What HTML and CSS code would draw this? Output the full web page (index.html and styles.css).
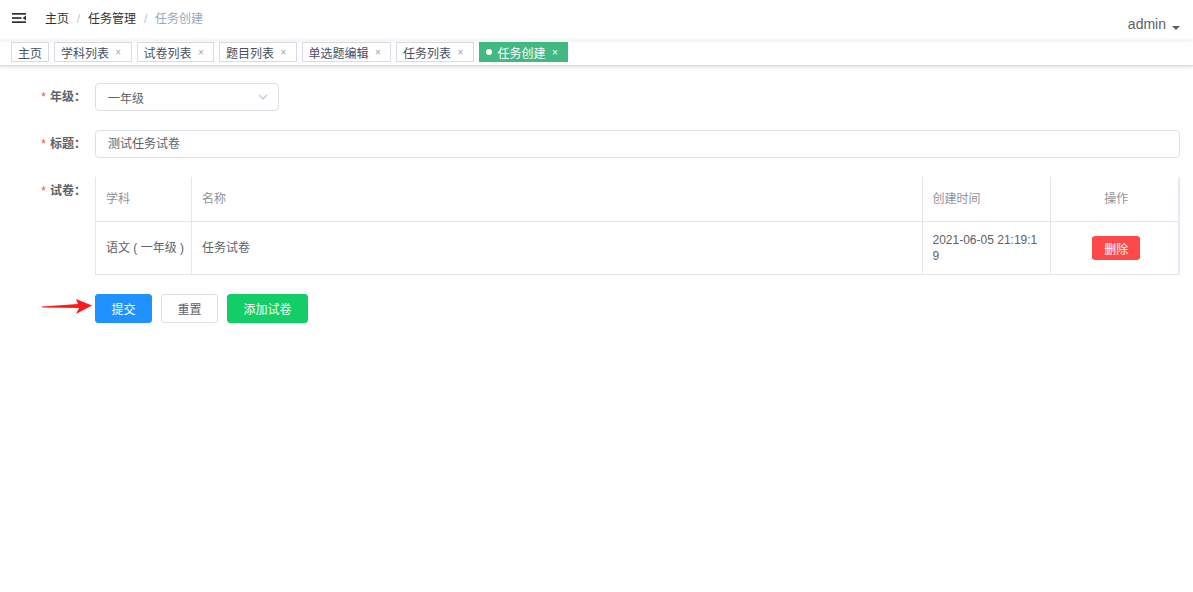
FILE: index.html
```html
<!DOCTYPE html>
<html lang="zh-CN">
<head>
  <meta charset="UTF-8">
  <meta name="viewport" content="width=device-width, initial-scale=1.0">
  <title>任务创建</title>
  <link rel="stylesheet" href="styles.css">
</head>
<body>
  <div class="navbar">
    <div class="hamburger">
      <svg width="14" height="10" viewBox="0 0 14 10">
        <rect x="0" y="0" width="14" height="1.7" fill="#303133"/>
        <rect x="0" y="4.2" width="9.5" height="1.7" fill="#303133"/>
        <rect x="0" y="8.3" width="14" height="1.7" fill="#303133"/>
        <polygon points="14,2.6 10.6,5 14,7.4" fill="#303133"/>
      </svg>
    </div>
    <div class="breadcrumb">
      <span class="crumb">主页</span>
      <span class="sep">/</span>
      <span class="crumb">任务管理</span>
      <span class="sep">/</span>
      <span class="crumb current">任务创建</span>
    </div>
    <div class="right-menu">
      <span class="user">admin</span>
      <span class="caret"></span>
    </div>
  </div>

  <div class="tags-view">
    <span class="tag">主页</span>
    <span class="tag">学科列表<span class="close">×</span></span>
    <span class="tag">试卷列表<span class="close">×</span></span>
    <span class="tag">题目列表<span class="close">×</span></span>
    <span class="tag">单选题编辑<span class="close">×</span></span>
    <span class="tag">任务列表<span class="close">×</span></span>
    <span class="tag active"><span class="dot"></span>任务创建<span class="close">×</span></span>
  </div>

  <div class="app-container">
    <div class="form-item">
      <label class="label"><span class="req">*</span>年级：</label>
      <div class="content">
        <div class="select">
          <span>一年级</span>
          <svg class="chevron" width="10" height="6" viewBox="0 0 10 6">
            <polyline points="1,1 5,5 9,1" fill="none" stroke="#c0c4cc" stroke-width="1.2"/>
          </svg>
        </div>
      </div>
    </div>

    <div class="form-item">
      <label class="label"><span class="req">*</span>标题：</label>
      <div class="content">
        <div class="input">测试任务试卷</div>
      </div>
    </div>

    <div class="form-item">
      <label class="label"><span class="req">*</span>试卷：</label>
      <div class="content">
        <table class="table">
          <colgroup>
            <col style="width: 96px">
            <col>
            <col style="width: 128px">
            <col style="width: 129px">
          </colgroup>
          <thead>
            <tr>
              <th>学科</th>
              <th>名称</th>
              <th>创建时间</th>
              <th class="center">操作</th>
            </tr>
          </thead>
          <tbody>
            <tr>
              <td class="nowrap">语文 ( 一年级 )</td>
              <td>任务试卷</td>
              <td class="time">2021-06-05 21:19:19</td>
              <td class="center"><button class="btn-danger">删除</button></td>
            </tr>
          </tbody>
        </table>
      </div>
    </div>

    <div class="form-item actions">
      <div class="label"></div>
      <div class="content buttons">
        <button class="btn primary">提交</button>
        <button class="btn">重置</button>
        <button class="btn success">添加试卷</button>
      </div>
    </div>
  </div>

  <!-- annotation arrow -->
  <svg class="arrow" width="54" height="20" viewBox="0 0 54 20">
    <polygon points="0,8.5 36,6 34,1 50,7.5 34,16 37,10 0,9.5" fill="#ff1a1a"/>
  </svg>
</body>
</html>
```

FILE: styles.css
```css
body {
  margin: 0;
  font-family: "Liberation Sans", "Noto Sans CJK SC", sans-serif;
  font-size: 12px;
  color: #606266;
  background: #fff;
  position: relative;
}

/* top bar */
.navbar {
  height: 40px;
  display: flex;
  align-items: flex-start;
  box-shadow: 0 1px 3px rgba(0, 21, 41, 0.08);
  position: relative;
}
.hamburger {
  padding: 13px 0 0 12px;
  line-height: 0;
}
.breadcrumb {
  margin-left: 19px;
  line-height: 38px;
  font-size: 12px;
  color: #303133;
}
.breadcrumb .sep {
  color: #c0c4cc;
  margin: 0 4.5px;
}
.breadcrumb .current {
  color: #97a8be;
}
.right-menu {
  margin-left: auto;
  margin-right: 13px;
  padding-top: 14px;
  display: flex;
  align-items: center;
}
.user {
  font-size: 14px;
  color: #5a5e66;
  line-height: 20px;
}
.caret {
  width: 0;
  height: 0;
  border-left: 4px solid transparent;
  border-right: 4px solid transparent;
  border-top: 4px solid #5a5e66;
  margin: 8px 0 0 6px;
}

/* tags */
.tags-view {
  height: 26px;
  display: flex;
  align-items: flex-start;
  gap: 5px;
  padding: 2px 0 0 11px;
  box-sizing: border-box;
  border-bottom: 1px solid #d8dce5;
  box-shadow: 0 1px 3px rgba(0, 0, 0, 0.12), 0 0 3px rgba(0, 0, 0, 0.04);
}
.tag {
  display: inline-flex;
  align-items: center;
  height: 20px;
  box-sizing: border-box;
  padding: 0 6px;
  border: 1px solid #d8dce5;
  color: #495060;
  font-size: 12px;
  background: #fff;
}
.tag .close {
  width: 12.5px;
  margin-left: 3px;
  text-align: center;
  font-size: 10px;
  color: #a0a3a8;
}
.tag.active {
  background: #42b983;
  border-color: #42b983;
  color: #fff;
}
.tag.active .close {
  color: #fff;
}
.dot {
  width: 6px;
  height: 6px;
  border-radius: 50%;
  background: #fff;
  margin-right: 6px;
}

/* form */
.app-container {
  padding: 17px 13px 0 15px;
}
.form-item {
  display: flex;
  margin-bottom: 19px;
}
.label {
  width: 80px;
  flex: none;
  box-sizing: border-box;
  padding-right: 9px;
  text-align: right;
  line-height: 28px;
  font-weight: bold;
  color: #606266;
}
.req {
  color: #ff4949;
  font-weight: normal;
  margin-right: 4px;
}
.content {
  flex: 1;
  min-width: 0;
}
.select {
  width: 184px;
  height: 28px;
  box-sizing: border-box;
  border: 1px solid #dcdfe6;
  border-radius: 4px;
  padding: 0 10px 0 12px;
  display: flex;
  align-items: center;
  justify-content: space-between;
  color: #606266;
}
.input {
  height: 28px;
  box-sizing: border-box;
  border: 1px solid #dcdfe6;
  border-radius: 4px;
  padding: 0 12px;
  line-height: 26px;
  color: #606266;
}

/* table */
.table {
  width: 100%;
  border-collapse: collapse;
  table-layout: fixed;
  border-left: 1px solid #e4e8ee;
  border-right: 2px solid #e3e8f2;
}
.table th,
.table td {
  border-right: 1px solid #e4e8ee;
  border-bottom: 1px solid #e4e8ee;
  text-align: left;
  vertical-align: middle;
  line-height: 16px;
}
.table th {
  height: 44px;
  padding: 0 10px;
  color: #909399;
  font-weight: normal;
}
.table td {
  padding: 10px 10px;
  color: #606266;
}
.table .nowrap {
  white-space: nowrap;
}
.table .time {
  word-break: break-all;
}
.table .center {
  text-align: center;
  padding-left: 14px;
  padding-right: 10px;
}
.btn-danger {
  background: #ff4949;
  color: #fff;
  border: none;
  border-radius: 3px;
  width: 48px;
  height: 24px;
  font-family: inherit;
  font-size: 12px;
  padding: 0;
}

/* buttons */
.buttons {
  display: flex;
  gap: 9px;
}
.btn {
  height: 29px;
  padding: 0 15.5px;
  border: 1px solid #dcdfe6;
  border-radius: 3px;
  background: #fff;
  color: #606266;
  font-family: inherit;
  font-size: 12px;
}
.btn.primary {
  background: #1f92ff;
  border-color: #1f92ff;
  color: #fff;
}
.btn.success {
  background: #13ce66;
  border-color: #13ce66;
  color: #fff;
}

.arrow {
  position: absolute;
  left: 42px;
  top: 298px;
}
```
